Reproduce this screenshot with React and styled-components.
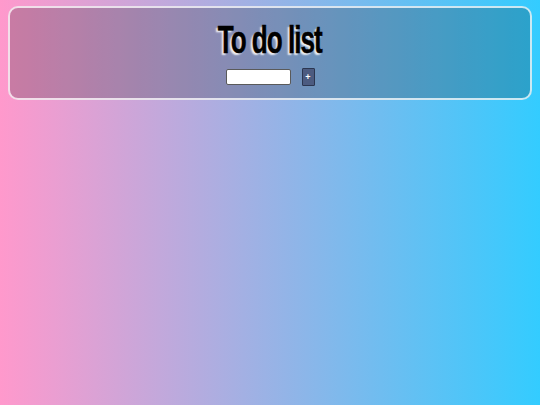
import React, { useState } from "react";
import styled, { createGlobalStyle } from "styled-components";

const GlobalStyle = createGlobalStyle`
  html, body {
    margin: 0;
    padding: 0;
  }
  body {
    min-height: 405px;
    background: linear-gradient(to right, #ff99cc, #33ccff);
    font-family: "Liberation Sans", Arial, sans-serif;
  }
`;

const Page = styled.div`
  padding: 6px 8px;
`;

const Header = styled.header`
  display: flex;
  flex-direction: column;
  align-items: center;
  height: 94px;
  box-sizing: border-box;
  border: 2px solid rgba(255, 255, 255, 0.75);
  border-radius: 10px;
  background-color: rgba(0, 0, 0, 0.2);
`;

// the original uses a narrow geometric face; squeeze a bold sans to match
const Title = styled.h1`
  margin: 12px 0 0;
  font-family: "Liberation Sans", Arial, sans-serif;
  font-weight: bold;
  font-size: 39px;
  line-height: 40px;
  letter-spacing: -1.5px;
  color: #000;
  -webkit-text-stroke: 0.5px #000;
  text-shadow: -3px 2px 2px rgba(255, 255, 255, 0.85);
  transform: scaleX(0.67);
`;

const Form = styled.form`
  display: flex;
  align-items: center;
  gap: 11px;
  margin-top: 8px;
`;

const Input = styled.input`
  width: 65px;
  height: 16px;
  box-sizing: border-box;
  padding: 0 3px;
  border: 1px solid #5a5a5a;
  border-radius: 2px;
  background: #fff;
  font-size: 10px;
`;

const AddButton = styled.button`
  width: 13px;
  height: 18px;
  padding: 0;
  border: 1px solid #2c3650;
  border-radius: 1px;
  background: #4c5b80;
  color: #fff;
  font-family: "Liberation Sans", Arial, sans-serif;
  font-size: 9px;
  font-weight: bold;
  line-height: 1;
`;

export default function App() {
  const [text, setText] = useState("");
  return (
    <>
      <GlobalStyle />
      <Page>
        <Header>
          <Title>To do list</Title>
          <Form onSubmit={(e) => e.preventDefault()}>
            <Input value={text} onChange={(e) => setText(e.target.value)} />
            <AddButton type="submit">+</AddButton>
          </Form>
        </Header>
      </Page>
    </>
  );
}
